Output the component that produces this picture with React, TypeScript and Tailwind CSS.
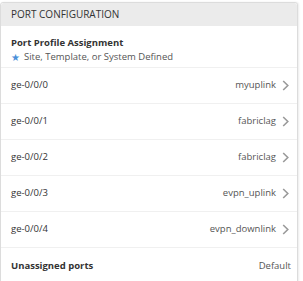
import React from 'react';

const ports = [
  { name: 'ge-0/0/0', profile: 'myuplink' },
  { name: 'ge-0/0/1', profile: 'fabriclag' },
  { name: 'ge-0/0/2', profile: 'fabriclag' },
  { name: 'ge-0/0/3', profile: 'evpn_uplink' },
  { name: 'ge-0/0/4', profile: 'evpn_downlink' },
];

function Chevron() {
  return (
    <svg width="7" height="11" viewBox="0 0 7 11" fill="none">
      <path d="M1.2 1 L5.8 5.5 L1.2 10" stroke="#9a9a9a" strokeWidth="1.6" />
    </svg>
  );
}

export default function App() {
  return (
    <div className="w-[303px] h-[281px] bg-white pt-[2px] overflow-hidden" style={{ fontFamily: '"Open Sans", sans-serif' }}>
      <div className="w-[298px] h-[290px] border border-[#dcdcdc] rounded-t-[3px] shadow-[1px_0_2px_rgba(0,0,0,0.08)] bg-white">
        {/* Header */}
        <div className="h-[23px] bg-[#ebebeb] rounded-t-[3px] px-[10px] flex items-center text-[10px] text-[#333]">
          PORT CONFIGURATION
        </div>

        {/* Assignment info */}
        <div className="px-[10px] pt-[10px] pb-[3px] border-b border-[#f0f0f0]">
          <div className="text-[9.5px] font-bold text-[#333] leading-[14px]">Port Profile Assignment</div>
          <div className="flex items-center gap-[4px] text-[9.5px] text-[#555] leading-[14px]">
            <span className="text-[#4a90d9] text-[10px]">★</span>
            Site, Template, or System Defined
          </div>
        </div>

        {ports.map((p) => (
          <div key={p.name} className="h-[36px] pl-[10px] pr-[8px] flex items-center justify-between border-b border-[#f0f0f0] text-[9.5px] text-[#333]">
            <span>{p.name}</span>
            <span className="flex items-center gap-[6px] text-[#555]">
              {p.profile}
              <Chevron />
            </span>
          </div>
        ))}

        <div className="h-[36px] pl-[10px] pr-[6px] flex items-center justify-between text-[9.5px]">
          <span className="font-bold text-[#333]">Unassigned ports</span>
          <span className="text-[#555]">Default</span>
        </div>
      </div>
    </div>
  );
}
